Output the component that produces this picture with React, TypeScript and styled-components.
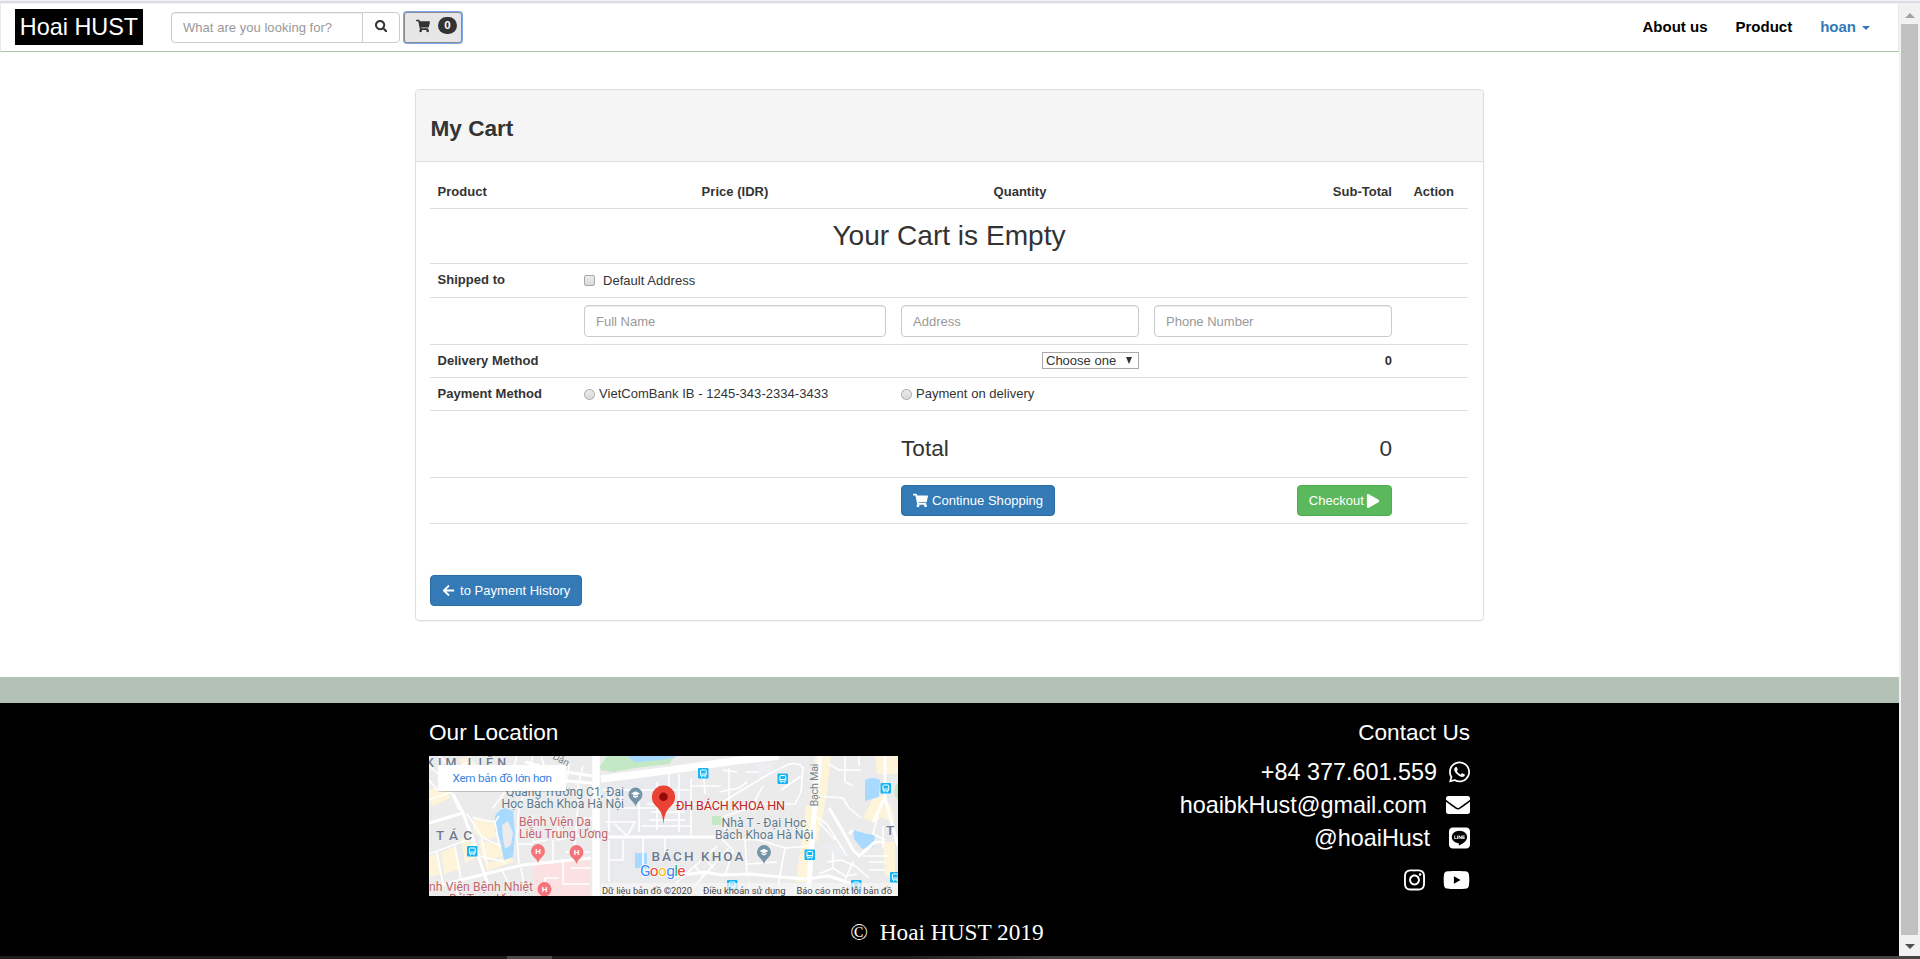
import React from "react";
import styled, { createGlobalStyle, css } from "styled-components";
import {
  FaArrowLeft,
  FaEnvelope,
  FaInstagram,
  FaLine,
  FaPlay,
  FaSearch,
  FaShoppingCart,
  FaWhatsapp,
  FaYoutube,
} from "react-icons/fa";

const GlobalStyle = createGlobalStyle`
  *, *::before, *::after { box-sizing: border-box; }
  body {
    margin: 0;
    overflow: hidden;
    background: #fff;
    color: #333;
    font: 13px/18px "Liberation Sans", Arial, sans-serif;
  }
  h1, h2, h3, p { margin: 0; font-weight: 400; }
  input, button, select { font-family: inherit; }
`;

const Window = styled.div`
  width: 1920px;
  height: 959px;
  display: flex;
  flex-direction: column;
  overflow: hidden;
`;

const TopEdge = styled.div`
  flex: none;
  height: 4px;
  background: #dadce2;
  border-top: 1px solid #f1f2f4;
  border-bottom: 1px solid #f1f2f4;
`;

const BottomEdge = styled.div`
  flex: none;
  height: 3px;
  padding-left: 507px;
  background: linear-gradient(90deg, #1d1d1d 0, #1d1d1d 900px, #444 1050px, #444 100%);
  &::before {
    content: "";
    display: block;
    width: 45px;
    height: 3px;
    background: #4b4b4b;
  }
`;

const Viewport = styled.div`
  flex: 1;
  min-height: 0;
  display: flex;
`;

const Page = styled.div`
  width: 1899px;
  display: flex;
  flex-direction: column;
`;

/* ---------- scrollbar ---------- */

const ScrollTrack = styled.div`
  width: 21px;
  padding: 0 2px;
  display: flex;
  flex-direction: column;
  align-items: center;
  background: #f1f1f1;
`;

const ScrollArrow = styled.div<{ $down?: boolean }>`
  width: 17px;
  height: ${(p) => (p.$down ? 21 : 20)}px;
  display: flex;
  align-items: center;
  justify-content: center;
  &::before {
    content: "";
    margin-top: 2px;
    border: 5px solid transparent;
    ${(p) =>
      p.$down
        ? css`border-top-color: #505050; border-bottom-width: 0;`
        : css`border-bottom-color: #a3a3a3; border-top-width: 0;`}
  }
`;

const ScrollThumb = styled.div`
  flex: 1;
  width: 17px;
  background: #c1c1c1;
`;

/* ---------- navbar ---------- */

const Navbar = styled.header`
  flex: none;
  height: 48px;
  padding-left: 14px;
  display: flex;
  align-items: flex-start;
  border-style: solid;
  border-width: 0 1px 1px;
  border-color: #e7e7e7 #e7e7e7 #a9c8a5;
`;

const Brand = styled.a`
  width: 128px;
  height: 36px;
  margin: 5px 28px 0 0;
  background: #000;
  color: #fff;
  font-size: 23.4px;
  line-height: 36px;
  text-align: center;
`;

const control = css`
  border: 1px solid #ccc;
  background: #fff;
  color: #333;
  font-size: 13px;
`;

const SearchGroup = styled.form`
  display: flex;
  margin: 8px 4px 0 0;
`;

const SearchInput = styled.input`
  ${control}
  width: 192px;
  height: 31px;
  padding: 0 11px;
  border-radius: 4px 0 0 4px;
  box-shadow: inset 0 1px 1px rgba(0, 0, 0, 0.075);
  &::placeholder { color: #999; opacity: 1; letter-spacing: 0.04px; }
`;

const SearchButton = styled.button`
  ${control}
  width: 38px;
  height: 31px;
  margin-left: -1px;
  padding: 0 0 3px;
  display: flex;
  align-items: center;
  justify-content: center;
  border-radius: 0 4px 4px 0;
`;

const CartButton = styled.button`
  width: 58px;
  height: 31px;
  margin-top: 8px;
  padding: 0 4px 4px 11px;
  display: flex;
  align-items: center;
  justify-content: space-between;
  border: 1px solid #8c8c8c;
  border-radius: 3px;
  box-shadow: 0 0 0 1px #7fa9ee;
  background: #e6e6e6;
  color: #333;
`;

const Badge = styled.span`
  width: 19px;
  height: 17px;
  border-radius: 9px;
  background: #333;
  color: #fff;
  font-size: 11.5px;
  font-weight: 700;
  line-height: 17px;
  text-align: center;
`;

const NavLinks = styled.nav`
  margin-left: auto;
  padding: 14px 28px 0 0;
  display: flex;
  gap: 28px;
  font-size: 15px;
  font-weight: 700;
`;

const NavLink = styled.a<{ $accent?: boolean }>`
  display: flex;
  align-items: center;
  color: ${(p) => (p.$accent ? "#337ab7" : "#000")};
`;

const Caret = styled.span`
  margin: 2px 0 0 6px;
  border: 4px solid transparent;
  border-top-color: currentColor;
  border-bottom: 0;
`;

/* ---------- cart panel ---------- */

const Main = styled.main`
  flex: none;
  height: 625px;
  padding: 37px 0 0 415px;
`;

const Panel = styled.section`
  width: 1069px;
  height: 532px;
  border: 1px solid #ddd;
  border-radius: 4px;
  box-shadow: 0 1px 1px rgba(0, 0, 0, 0.05);
`;

const PanelHeading = styled.div`
  height: 72px;
  padding: 25px 14.5px 0;
  background: #f5f5f5;
  border-bottom: 1px solid #ddd;
  border-radius: 3px 3px 0 0;
`;

const PanelTitle = styled.h2`
  font-size: 22.6px;
  font-weight: 700;
  line-height: 27px;
`;

const PanelBody = styled.div`
  padding: 15px 14px;
`;

const Table = styled.div`
  width: 1038px;
  border-bottom: 1px solid #ddd;
`;

const Row = styled.div<{ $height: number; $first?: boolean }>`
  height: ${(p) => p.$height}px;
  padding-top: ${(p) => (p.$first ? 6 : 7)}px;
  display: grid;
  grid-template-columns: 146.5px 317px 253px 253px 68.5px;
  align-items: start;
  ${(p) => !p.$first && css`border-top: 1px solid #ddd;`}
`;

const Cell = styled.div<{ $align?: string; $bold?: boolean; $col?: number }>`
  padding: 0 7.5px;
  text-align: ${(p) => p.$align || "left"};
  font-weight: ${(p) => (p.$bold ? 700 : 400)};
  letter-spacing: 0.03px;
  ${(p) => p.$col && css`grid-column-start: ${p.$col};`}
`;

const EmptyMessage = styled.h1`
  grid-column: 1 / -1;
  padding-top: 3px;
  text-align: center;
  font-size: 28.1px;
  line-height: 34px;
`;

const TotalText = styled.h3`
  padding-top: 17px;
  font-size: 22.6px;
  line-height: 27px;
`;

const TextInput = styled.input`
  ${control}
  display: block;
  width: 100%;
  height: 32px;
  padding: 0 11px;
  border-radius: 4px;
  box-shadow: inset 0 1px 1px rgba(0, 0, 0, 0.075);
  &::placeholder { color: #999; opacity: 1; }
`;

const Choice = styled.label<{ $gap: number; $drop?: number }>`
  padding-top: ${(p) => p.$drop || 0}px;
  display: flex;
  align-items: center;
  gap: ${(p) => p.$gap}px;
`;

const Toggle = styled.input`
  appearance: none;
  width: 11px;
  height: 11px;
  margin: ${(p) => (p.type === "radio" ? 1 : -1)}px 0 0;
  border: 1px solid #a6a6a6;
  border-radius: ${(p) => (p.type === "radio" ? "50%" : "2px")};
  background: linear-gradient(#ececec, #d9d9d9);
`;

const DeliverySelect = styled.button`
  width: 97px;
  height: 17px;
  padding: 0 6px 0 3px;
  display: inline-flex;
  align-items: center;
  justify-content: space-between;
  vertical-align: top;
  border: 1px solid #a9a9a9;
  border-radius: 0;
  background: #fff;
  color: #333;
  font-size: 13px;
  line-height: 15px;
`;

const SelectArrow = styled.span`
  border: 3.5px solid transparent;
  border-top: 7px solid #333;
  border-bottom: 0;
`;

const Button = styled.a<{ $green?: boolean; $gap: number }>`
  height: 31px;
  padding: 0 11px;
  display: inline-flex;
  align-items: center;
  gap: ${(p) => p.$gap}px;
  vertical-align: top;
  border: 1px solid ${(p) => (p.$green ? "#4cae4c" : "#2e6da4")};
  border-radius: 4px;
  background: ${(p) => (p.$green ? "#5cb85c" : "#337ab7")};
  color: #fff;
  font-size: 13px;
  letter-spacing: 0.03px;
  white-space: nowrap;
`;

const HistoryLine = styled.div`
  margin-top: 51px;
`;

/* ---------- footer ---------- */

const Footer = styled.footer`
  flex: 1;
  border-top: 26px solid #b4c1b7;
  background: #000;
  color: #fff;
`;

const FooterColumns = styled.div`
  width: 1041px;
  height: 193px;
  margin-left: 429px;
  padding-top: 17px;
  display: flex;
  justify-content: space-between;
`;

const FooterTitle = styled.h3`
  height: 36px;
  font-size: 22.6px;
  line-height: 26px;
`;

const MapFrame = styled.svg`
  display: block;
  width: 469px;
  height: 140px;
  font-family: Roboto, sans-serif;
`;

const Contact = styled.div`
  display: flex;
  flex-direction: column;
  align-items: flex-end;
`;

const ContactLine = styled.p<{ $gap: number; $icon: number }>`
  height: 33px;
  display: flex;
  align-items: center;
  gap: ${(p) => p.$gap}px;
  font-size: 23.4px;
  line-height: 33px;
  svg {
    display: block;
    width: ${(p) => p.$icon}px;
    height: 24px;
    margin-top: -1px;
  }
`;

const Social = styled.div`
  height: 24px;
  margin-top: 13px;
  display: flex;
  align-items: center;
  gap: 18px;
  svg { height: 24px; }
  svg:first-child { width: 21px; }
  svg:last-child { width: 27px; }
`;

const Copyright = styled.p`
  padding-top: 21px;
  padding-right: 5px;
  text-align: center;
  font-family: "Liberation Serif", "Times New Roman", serif;
  font-size: 23.3px;
  line-height: 30px;
  white-space: pre;
`;

/* ---------- map ---------- */

const BusStop = ({ x, y }: { x: number; y: number }) => (
  <g transform={`translate(${x - 5} ${y - 5})`}>
    <rect width="10.5" height="10.5" rx="1" fill="#12b5f5" />
    <rect x="2.4" y="2" width="5.8" height="5.8" rx="1" fill="none" stroke="#fff" />
    <path d="M2.5 6h5.6M3 8.6h1M6.6 8.6h1" stroke="#fff" strokeWidth="1.2" />
  </g>
);

const HospitalPin = ({ x, y }: { x: number; y: number }) => (
  <g transform={`translate(${x} ${y})`}>
    <path d="M0 12C-1 9-2 8-5 5A7 7 0 1 1 5 5C2 8 1 9 0 12Z" fill="#f5737a" />
    <text y="2.8" textAnchor="middle" fontSize="8" fontWeight="700" fill="#fff">H</text>
  </g>
);

const SchoolPin = ({ x, y }: { x: number; y: number }) => (
  <g transform={`translate(${x} ${y})`}>
    <path d="M0 12C-1 9-2 8-5 5A7 7 0 1 1 5 5C2 8 1 9 0 12Z" fill="#7494a8" />
    <path d="M-4.5-1L0-3.3 4.5-1 0 1.3ZM-2.5.8V2.2L0 3.4 2.5 2.2V.8L0 2Z" fill="#fff" />
  </g>
);

type LabelProps = {
  x: number;
  y: number;
  w: number;
  size: number;
  fill: string;
  children: React.ReactNode;
  halo?: boolean;
  weight?: number;
  transform?: string;
};

const Label = ({ x, y, w, size, fill, children, halo = true, weight = 400, transform }: LabelProps) => (
  <text
    x={x}
    y={y}
    textLength={w}
    fontSize={size}
    fontWeight={weight}
    fill={fill}
    stroke={halo ? "#f4f4f4" : "none"}
    strokeWidth={1.6}
    strokeOpacity={0.7}
    strokeLinejoin="round"
    paintOrder="stroke"
    transform={transform}
  >
    {children}
  </text>
);

const LocationMap = () => (
  <MapFrame viewBox="0 0 469 140">
    <rect width="469" height="140" fill="#ebebeb" />
    {/* campus and hospital grounds */}
    <path d="M174 22L260 16 262 81 240 122 174 126Z" fill="#e8eaed" />
    <path d="M326 9l16-3 4 13-16 5ZM396 91l14-5 9 9-14 12Z" fill="#eceef1" />
    <path d="M104 109L161 103V140H106Z" fill="#fbe1e2" />
    {/* built-up blocks */}
    <g fill="#fdf4d9">
      <path d="M30 4l10-4 8 10-10 6ZM0 34l16-6 5 14-19 9ZM44 60l22 8 4 12-14 4-12-8ZM32 82l12-3 8 20-16 8ZM50 84l22 6 2 10-20 6ZM12 96l14-5 6 22-17 5ZM0 100l8-2 5 20-13 3ZM56 108l26-8 2 6-26 9Z" />
      <path d="M386 0h16l-5 44-9 42-10-2ZM377 50h8l-5 76h-13ZM446 0h24v18h-22ZM434 62l12-24 12 3-4 18-8 8ZM454 86h12v34h-10ZM448 60l14-14 4 20Z" />
    </g>
    {/* parks */}
    <path d="M171 10L178 0H246L240 8 206 12 184 16 172 14Z" fill="#c3e8c5" />
    <path d="M283 60h9v9h-9ZM469 26q-5 6-3 14l3 4Z" fill="#c3e8c5" />
    {/* lakes */}
    <g fill="#a8daff">
      <path d="M199 0H248Q240 4 220 5L206 6 202 3Z" />
      <path d="M66 60Q70 53 76 52L84 55 86 77 84 101 75 104 71 84 66 74Z" />
      <path d="M206 97h12v15h-12ZM436 24q7-4 15 0l-1 17-14 4ZM424 74l14 4 8 1-1 12-12 2-8-10Z" />
    </g>
    <path d="M73 69l6-4 5 12-2 12-6 4-2-10Z" fill="#ebebeb" />
    {/* side streets */}
    <g fill="none" stroke="#fff" strokeWidth="1.6" strokeLinejoin="round">
      <path d="M0 10L14 22 24 12M0 24L10 36 24 30M0 44L22 36 30 54M10 0L24 14 38 6M24 14L38 30M88 0L84 14 98 18M104 0L98 20M112 0L116 12M140 8L138 26 124 22M154 10L148 34M76 36L64 52M98 34L88 52" />
      <path d="M0 98L38 84M8 96L14 128M26 90L32 124M38 58L54 82 72 90M44 62L66 66 70 60M52 80L58 108M50 100L76 106M66 66L70 88M24 128L30 140M72 112L78 124 76 140M92 112L96 136M90 50L88 80 90 108M88 88H104M104 60V86L118 84M124 84V104M130 62L128 84 150 80M150 30L148 62H163M148 62L144 104M136 96H162" />
      <path d="M116 140V122h14M134 106V128L160 128M142 112h20M174 34H226M180 34V76M192 34V52H226M176 66H206L198 80 186 68M210 40V76M218 48H256M222 56H256M220 64H256M228 26V74M240 18V34H260M250 18V76M212 70H262M214 82V122M236 82V100M180 84V126M194 84V104H180" />
      <path d="M262 22V82M262 30H292M274 12L276 38M262 48H280L300 44V12M290 36L310 32 318 26M294 14L308 16M316 16H330M280 54L340 18 360 8Q370 6 374 12L372 36 366 48H334L296 60V82M324 56V48L334 30M352 34L372 20" />
      <path d="M388 40L414 42 420 52 432 62M400 8L410 14H432M416 0V26L424 30M430 0V10M386 60L398 68 418 100M452 46L444 78 456 84M390 66L406 84M398 106L412 104 426 110 440 122M390 118L404 112 416 120 428 118M404 96V112M434 100H460M440 106H456M440 114H456M454 70V92" />
      <path d="M293 82L330 84 356 92 380 90M356 92L350 124M292 82L304 94 296 120M316 84L318 120M318 108L348 106M288 90L246 128M300 92L262 134M276 102L284 112M266 110L274 120M320 126V140M350 124V140M366 128V140M416 124L424 106" />
    </g>
    {/* local roads */}
    <g fill="none" stroke="#fff" strokeWidth="3" strokeLinejoin="round">
      <path d="M0 67L34 57 44 84 60 132M0 132L56 118 94 109 162 102M96 6L130 15 164 20M34 57L24 38M124 24L163 27" />
      <path d="M172 81H293M400 52L412 72 424 94 430 100 446 86H456M456 0V42L469 90M456 42L444 66M293 119L320 118 376 123 400 120 440 134 469 140M246 120L276 116 293 119M420 78L424 74" />
    </g>
    <path d="M167 0V140M172 23L235 15 305 5 350 0" fill="none" stroke="#fff" strokeWidth="7.5" />
    <path d="M391 0L386 46 379 140" fill="none" stroke="#fff" strokeWidth="5" />

    <BusStop x={43} y={95} />
    <BusStop x={274} y={17} />
    <BusStop x={353.500} y={22.500} />
    <BusStop x={456.500} y={32} />
    <BusStop x={380.500} y={98.500} />
    <BusStop x={303} y={129} />
    <BusStop x={427} y={129} />
    <BusStop x={466} y={121} />

    <Label x={-3} y={10.5} w={80} size={12.500} fill="#6c7a90" weight={500}>KIM LIÊN</Label>
    <Label x={123} y={2.5} w={17} size={10} fill="#78828c" transform="rotate(28 123 2.5)">Dân</Label>
    <Label x={77} y={39.5} w={118} size={12.2} fill="#5d7a8c">Quảng Trường C1, Đại</Label>
    <Label x={72.5} y={51.5} w={122.5} size={12.2} fill="#5d7a8c">Học Bách Khoa Hà Nội</Label>
    <Label x={90} y={69.5} w={72} size={12.2} fill="#c0656b">Bệnh Viện Da</Label>
    <Label x={90} y={82} w={89} size={12.2} fill="#c0656b">Liễu Trung Ương</Label>
    <Label x={7} y={83.5} w={36} size={13.5} fill="#6c7a90" weight={500}>TÁC</Label>
    <Label x={0} y={135} w={104} size={12.2} fill="#c0656b">nh Viện Bệnh Nhiệt</Label>
    <Label x={20} y={147} w={74} size={12.2} fill="#c0656b">Đới Trung Ương</Label>
    <Label x={222.5} y={105} w={92} size={13.5} fill="#6c7a90" weight={500}>BÁCH KHOA</Label>
    <Label x={247} y={54} w={109} size={12.6} fill="#c5221f">ĐH BÁCH KHOA HN</Label>
    <Label x={292.5} y={70.5} w={85} size={12.2} fill="#5d7a8c">Nhà T - Đại Học</Label>
    <Label x={286} y={82.5} w={98.5} size={12.2} fill="#5d7a8c">Bách Khoa Hà Nội</Label>
    <Label x={388.5} y={50.5} w={43} size={10.8} fill="#78828c" transform="rotate(-90 388.5 50.5)">Bạch Mai</Label>
    <Label x={457} y={78.5} w={22} size={13.5} fill="#6c7a90" weight={500}>TR</Label>

    <SchoolPin x={206.5} y={38.5} />
    <SchoolPin x={335} y={96} />
    <HospitalPin x={109} y={95} />
    <HospitalPin x={147.5} y={96} />
    <HospitalPin x={115.5} y={133} />

    <path
      d="M234.5 68C233.500 57 231 54 226.500 49.500A11.600 11.600 0 1 1 242.500 49.500C238 54 235.500 57 234.500 68Z"
      fill="#ea4335"
    />
    <circle cx="234.5" cy="40.7" r="4.3" fill="#960a0a" />

    <text x="211" y="120" fontSize="15.5" textLength="45.5" stroke="#fff" strokeWidth="1.5" paintOrder="stroke">
      <tspan fill="#4285f4">G</tspan>
      <tspan fill="#ea4335">o</tspan>
      <tspan fill="#fbbc04">o</tspan>
      <tspan fill="#4285f4">g</tspan>
      <tspan fill="#34a853">l</tspan>
      <tspan fill="#ea4335">e</tspan>
    </text>

    <rect x="172" y="127" width="297" height="13" fill="#f5f5f5" fillOpacity="0.72" />
    <Label x={173} y={138} w={90} size={9.4} fill="#444" halo={false}>Dữ liệu bản đồ ©2020</Label>
    <Label x={274} y={138} w={82.5} size={9.4} fill="#444" halo={false}>Điều khoản sử dụng</Label>
    <Label x={367.5} y={138} w={95.5} size={9.4} fill="#444" halo={false}>Báo cáo một lỗi bản đồ</Label>

    <rect x="9" y="10" width="128" height="26" rx="1" fill="#000" fillOpacity="0.2" />
    <rect x="9" y="9" width="128" height="26" rx="1" fill="#fff" />
    <Label x={23.5} y={26} w={99.5} size={11.7} fill="#3a84df" halo={false}>Xem bản đồ lớn hơn</Label>
  </MapFrame>
);

export default function App() {
  return (
    <Window>
      <GlobalStyle />
      <TopEdge />
      <Viewport>
        <Page>
          <Navbar>
            <Brand>Hoai HUST</Brand>
            <SearchGroup>
              <SearchInput placeholder="What are you looking for?" />
              <SearchButton type="button"><FaSearch size={12.6} /></SearchButton>
            </SearchGroup>
            <CartButton>
              <FaShoppingCart size={14} />
              <Badge>0</Badge>
            </CartButton>
            <NavLinks>
              <NavLink>About us</NavLink>
              <NavLink>Product</NavLink>
              <NavLink $accent>hoan<Caret /></NavLink>
            </NavLinks>
          </Navbar>

          <Main>
            <Panel>
              <PanelHeading>
                <PanelTitle>My Cart</PanelTitle>
              </PanelHeading>
              <PanelBody>
                <Table>
                  <Row $height={31} $first>
                    <Cell $bold>Product</Cell>
                    <Cell $bold $align="center">Price (IDR)</Cell>
                    <Cell $bold $align="center">Quantity</Cell>
                    <Cell $bold $align="right">Sub-Total</Cell>
                    <Cell $bold $align="center">Action</Cell>
                  </Row>
                  <Row $height={55}>
                    <EmptyMessage>Your Cart is Empty</EmptyMessage>
                  </Row>
                  <Row $height={34}>
                    <Cell $bold>Shipped to</Cell>
                    <Cell>
                      <Choice $gap={8} $drop={1}><Toggle type="checkbox" />Default Address</Choice>
                    </Cell>
                  </Row>
                  <Row $height={47}>
                    <Cell $col={2}><TextInput placeholder="Full Name" /></Cell>
                    <Cell><TextInput placeholder="Address" /></Cell>
                    <Cell><TextInput placeholder="Phone Number" /></Cell>
                  </Row>
                  <Row $height={33}>
                    <Cell $bold>Delivery Method</Cell>
                    <Cell $col={3} $align="right">
                      <DeliverySelect>Choose one<SelectArrow /></DeliverySelect>
                    </Cell>
                    <Cell $bold $align="right">0</Cell>
                  </Row>
                  <Row $height={33}>
                    <Cell $bold>Payment Method</Cell>
                    <Cell>
                      <Choice $gap={4}><Toggle type="radio" name="payment" />VietComBank IB - 1245-343-2334-3433</Choice>
                    </Cell>
                    <Cell>
                      <Choice $gap={4}><Toggle type="radio" name="payment" />Payment on delivery</Choice>
                    </Cell>
                  </Row>
                  <Row $height={67}>
                    <Cell $col={3}><TotalText>Total</TotalText></Cell>
                    <Cell $align="right"><TotalText>0</TotalText></Cell>
                  </Row>
                  <Row $height={46}>
                    <Cell $col={3}>
                      <Button $gap={4}><FaShoppingCart size={15} />Continue Shopping</Button>
                    </Cell>
                    <Cell $align="right">
                      <Button $green $gap={2}>Checkout<FaPlay size={14} /></Button>
                    </Cell>
                  </Row>
                </Table>
                <HistoryLine>
                  <Button $gap={5}><FaArrowLeft size={13} />to Payment History</Button>
                </HistoryLine>
              </PanelBody>
            </Panel>
          </Main>

          <Footer>
            <FooterColumns>
              <div>
                <FooterTitle>Our Location</FooterTitle>
                <LocationMap />
              </div>
              <Contact>
                <FooterTitle>Contact Us</FooterTitle>
                <ContactLine $gap={12} $icon={21}>+84 377.601.559<FaWhatsapp /></ContactLine>
                <ContactLine $gap={19} $icon={24}>hoaibkHust@gmail.com<FaEnvelope /></ContactLine>
                <ContactLine $gap={19} $icon={21}>@hoaiHust<FaLine /></ContactLine>
                <Social>
                  <FaInstagram />
                  <FaYoutube />
                </Social>
              </Contact>
            </FooterColumns>
            <Copyright>{"©  Hoai HUST 2019"}</Copyright>
          </Footer>
        </Page>
        <ScrollTrack>
          <ScrollArrow />
          <ScrollThumb />
          <ScrollArrow $down />
        </ScrollTrack>
      </Viewport>
      <BottomEdge />
    </Window>
  );
}
